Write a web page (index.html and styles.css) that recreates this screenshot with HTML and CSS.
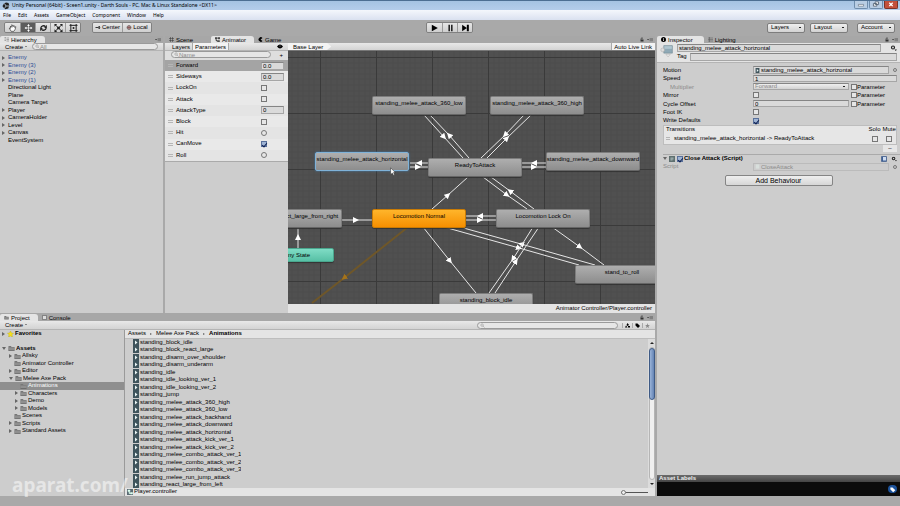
FILE: index.html
```
<!doctype html>
<html lang="en-us">
  <head>
    <meta charset="utf-8">
    <title>Unity Personal (64bit) - Sceen1.unity - Darth Souls</title>
    <link rel="stylesheet" href="styles.css">
  </head>
  <body>
	<svg class="defs" width="0" height="0" aria-hidden="true">
		<symbol id="i-folder" viewBox="0 0 14 12"><path d="M1 2h5l1 2h6v7H1z" fill="#777"/><path d="M1 5h12v6H1z" fill="#8f8f8f"/><path d="M1 11h12" stroke="#555"/></symbol>
		<symbol id="i-clip" viewBox="0 0 12 14"><path d="M0 0h12v14H0z" fill="#3f545c"/><path d="M4 3l5 4-5 4z" fill="#e8f4f4"/></symbol>
		<symbol id="i-lock" viewBox="0 0 10 10"><path d="M2 5h6v4H2z" fill="#333"/><path d="M3 5V3q2-3 4 0" fill="none" stroke="#333" stroke-width="1.4"/></symbol>
		<symbol id="i-menu" viewBox="0 0 14 10"><path d="M0 4h5L2.500 7z" fill="#333"/><path d="M6 3h8M6 5.500h8M6 8h8" stroke="#444"/></symbol>
		<symbol id="i-gear" viewBox="0 0 14 12"><circle cx="6" cy="5" r="3" fill="none" stroke="#222" stroke-width="2.400"/><path d="M9 9h5l-2.500 3z" fill="#222"/></symbol>
		<symbol id="i-search" viewBox="0 0 12 12"><circle cx="5" cy="5" r="3" fill="none" stroke="#777"/><path d="M7 7l4 4" stroke="#777"/></symbol>
	</svg>

	<header class="titlebar">
		<svg class="logo" viewBox="0 0 16 16"><path d="M8 1l5 1 1.500 5-2 6-6 1.500L2 10 1 8l3-5z" fill="#222"/><path d="M8 8h6M8 8L5 3M8 8l-3 5" stroke="#c8dcf0" stroke-width="1.500"/></svg>
		<h1>Unity Personal (64bit) - Sceen1.unity - Darth Souls - PC, Mac &amp; Linux Standalone &lt;DX11&gt;</h1>
		<div class="window-buttons">
			<button aria-label="Minimize"><svg viewBox="0 0 14 8"><path d="M4 4h6v2H4z" fill="#fff" stroke="#456" stroke-width=".6"/></svg></button>
			<button aria-label="Restore"><svg viewBox="0 0 14 8"><path d="M6 1h4v3H6zM4 3h4v3H4z" fill="#fff" stroke="#345" stroke-width=".8"/></svg></button>
			<button class="close" aria-label="Close"><svg viewBox="0 0 14 8"><path d="M5 2l4 4M9 2L5 6" stroke="#fff" stroke-width="1.500"/></svg></button>
		</div>
	</header>

	<nav class="menubar">
		<a href="#">File</a>
		<a href="#">Edit</a>
		<a href="#">Assets</a>
		<a href="#">GameObject</a>
		<a href="#">Component</a>
		<a href="#">Window</a>
		<a href="#">Help</a>
	</nav>

	<div class="toolbar">
		<div class="tools">
			<div class="group">
				<button aria-label="Hand"><svg viewBox="0 0 16 12"><path d="M6 11L3 6l2 .5V3l2 2V1l2 3 1-2 1 3 2-1-1 4-2 3z" fill="#fff" stroke="#333"/></svg></button>
				<button class="on" aria-label="Move"><svg viewBox="0 0 16 12"><path d="M8 1v10M3 6h10" stroke="#fff"/><path d="M8 0l2 3H6zM8 12l2-3H6zM2 6l3-2v4zM14 6l-3-2v4z" fill="#fff"/></svg></button>
				<button aria-label="Rotate"><svg viewBox="0 0 16 12"><path d="M4 6a4 4 0 0 1 7-2M12 6a4 4 0 0 1-7 2" fill="none" stroke="#222" stroke-width="2"/><path d="M13 1v5H9zM3 11V6h4z" fill="#222"/></svg></button>
				<button aria-label="Scale"><svg viewBox="0 0 16 12"><path d="M3 1l10 10M13 1L3 11" stroke="#222" stroke-width="1.500"/><path d="M6 4h4v4H6zM2 0h4L2 4zM14 0v4l-4-4zM2 12V8l4 4zM14 12h-4l4-4z" fill="#222"/></svg></button>
				<button aria-label="Rect"><svg viewBox="0 0 16 12"><path d="M4 0v12M12 0v12M2 2h12M2 10h12" stroke="#222" stroke-width="1.500"/><circle cx="8" cy="6" r="1.500" fill="#222"/></svg></button>
			</div>
			<div class="group wide">
				<button><svg viewBox="0 0 12 10"><path d="M1 5h6M9 2v6" stroke="#333" stroke-width="2"/><circle cx="8" cy="5" r="2.500" fill="#555"/></svg>Center</button>
				<button><svg viewBox="0 0 12 10"><circle cx="6" cy="5" r="4" fill="#b9a0a0" stroke="#444"/><path d="M2 5h8M6 1v8" stroke="#733"/></svg>Local</button>
			</div>
		</div>
		<div class="group play">
			<button aria-label="Play"><svg viewBox="0 0 14 12"><path d="M3 1l9 5-9 5z"/></svg></button>
			<button aria-label="Pause"><svg viewBox="0 0 14 12"><path d="M4 1h2v10H4zM8 1h2v10H8z"/></svg></button>
			<button aria-label="Step"><svg viewBox="0 0 14 12"><path d="M2 1l7 5-7 5zM9 1h3v10H9z"/></svg></button>
		</div>
		<div class="dropdowns">
			<select aria-label="Layers"><option>Layers</option></select>
			<select aria-label="Layout"><option>Layout</option></select>
			<select class="account" aria-label="Account"><option>Account</option></select>
		</div>
	</div>

	<main class="workspace">
		<section class="hierarchy panel">
			<div class="tabs">
				<button class="tab on"><svg viewBox="0 0 10 10"><path d="M1 1h3M1 4h3M1 7h3M5 2h5M5 5h5M5 8h5" stroke="#666"/></svg>Hierarchy</button>
				<span class="corner"><svg viewBox="0 0 14 10"><use href="#i-menu"/></svg></span>
			</div>
			<div class="bar">
				<button class="create">Create <i></i></button>
				<label class="search"><svg viewBox="0 0 12 12"><use href="#i-search"/></svg><input type="text" placeholder="All" aria-label="Search hierarchy"></label>
			</div>
			<ul class="tree">
				<li class="prefab"><i class="arrow"></i>Enemy</li>
				<li class="prefab"><i class="arrow"></i>Enemy (3)</li>
				<li class="prefab"><i class="arrow"></i>Enemy (2)</li>
				<li class="prefab"><i class="arrow"></i>Enemy (1)</li>
				<li><i></i>Directional Light</li>
				<li><i></i>Plane</li>
				<li><i></i>Camera Target</li>
				<li><i class="arrow"></i>Player</li>
				<li><i class="arrow"></i>CameraHolder</li>
				<li><i class="arrow"></i>Level</li>
				<li><i class="arrow"></i>Canvas</li>
				<li><i></i>EventSystem</li>
			</ul>
		</section>

		<section class="animator panel">
			<div class="tabs">
				<button class="tab scene"><svg viewBox="0 0 10 10"><path d="M3 0v10M7 0v10M0 3h10M0 7h10" stroke="#333"/></svg>Scene</button>
				<button class="tab on"><svg viewBox="0 0 10 10"><path d="M0 1h4v3H0zM6 1h4v3H6zM5 7h4v3H5zM2 4v4h3M4 2h2" fill="#555" stroke="#333" stroke-width=".8"/></svg>Animator</button>
				<button class="tab"><svg viewBox="0 0 10 10"><path d="M9 2A4.500 4.500 0 1 0 9 8L5 5z"/></svg>Game</button>
				<span class="corner"><svg viewBox="0 0 10 10"><use href="#i-lock"/></svg><svg viewBox="0 0 14 10"><use href="#i-menu"/></svg></span>
			</div>
			<div class="split">
				<div class="params">
					<div class="bar">
						<button class="seg">Layers</button>
						<button class="seg on">Parameters</button>
						<svg class="eye" viewBox="0 0 12 10"><path d="M0 5q6-8 12 0-6 8-12 0z"/><circle cx="6" cy="4" r="1" fill="#aaa"/></svg>
					</div>
					<div class="find">
						<label class="search"><svg viewBox="0 0 12 12"><use href="#i-search"/></svg><input type="text" placeholder="Name" aria-label="Search parameters"></label>
						<button class="plus" aria-label="Add parameter">+</button>
					</div>
					<ul class="param-list">
						<li class="on"><b></b><label for="p1">Forward</label><input id="p1" type="text" value="0.0"></li>
						<li><b></b><label for="p2">Sideways</label><input id="p2" type="text" value="0.0"></li>
						<li><b></b><label for="p3">LockOn</label><input id="p3" type="checkbox"></li>
						<li><b></b><label for="p4">Attack</label><input id="p4" type="checkbox"></li>
						<li><b></b><label for="p5">AttackType</label><input id="p5" type="text" value="0"></li>
						<li><b></b><label for="p6">Block</label><input id="p6" type="checkbox"></li>
						<li><b></b><label for="p7">Hit</label><input id="p7" type="radio" name="hit"></li>
						<li><b></b><label for="p8">CanMove</label><input id="p8" type="checkbox" checked></li>
						<li><b></b><label for="p9">Roll</label><input id="p9" type="radio" name="roll"></li>
					</ul>
				</div>
				<div class="graph">
					<div class="bar">
						<span class="crumb">Base Layer</span>
						<button class="live">Auto Live Link</button>
					</div>
					<div class="canvas">
						<svg class="wires" aria-hidden="true">
							<defs>
								<pattern id="grid" x="32" y="6" width="56" height="56" patternUnits="userSpaceOnUse">
									<path d="M6 0v56M11 0v56M17 0v56M22 0v56M28 0v56M34 0v56M39 0v56M45 0v56M50 0v56M0 6h56M0 11h56M0 17h56M0 22h56M0 28h56M0 34h56M0 39h56M0 45h56M0 50h56" stroke="#494949" stroke-width=".7"/>
									<path d="M.5 0v56M0 .5h56" stroke="#3a3a3a"/>
								</pattern>
								<marker id="head" viewBox="0 0 6 6" refX="3" refY="3" markerWidth="6" markerHeight="6" markerUnits="userSpaceOnUse" orient="auto"><path d="M0 0l6 3-6 3z" fill="#fff"/></marker>
								<marker id="head-default" viewBox="0 0 6 6" refX="3" refY="3" markerWidth="6" markerHeight="6" markerUnits="userSpaceOnUse" orient="auto"><path d="M0 0l6 3-6 3z" fill="#a5731a"/></marker>
							</defs>
							<rect width="100%" height="100%" fill="url(#grid)"/>
							<path class="default" d="M120 176L56 227 24 252"/>
							<g class="wire">
								<path d="M136 64L156 86 175 107"/>
								<path d="M181 107L161 84 142 64"/>
								<path d="M236 64L217 84 193 107"/>
								<path d="M199 107L219 87 243 64"/>
								<path d="M140 112H131 122"/>
								<path d="M122 116H130 140"/>
								<path d="M258 112H246 234"/>
								<path d="M234 116H246 258"/>
								<path d="M144 158L160 144 180 126"/>
								<path d="M195 126L219 144 239 158"/>
								<path d="M246 158L222 140 203 126"/>
								<path d="M54 169H68 84"/>
								<path d="M10 197V186 176"/>
								<path d="M208 165H192 178"/>
								<path d="M178 169H192 208"/>
								<path d="M135 176L162 210 188 242"/>
								<path d="M156 176L231 197 291 214"/>
								<path d="M307 214L233 193 172 176"/>
								<path d="M245 176L225 208 201 242"/>
								<path d="M207 242L228 210 251 176"/>
								<path d="M264 176L292 196 316 214"/>
							</g>
						</svg>
						<div class="node low">standing_melee_attack_360_low</div>
						<div class="node high">standing_melee_attack_360_high</div>
						<div class="node horizontal selected">standing_melee_attack_horizontal</div>
						<div class="node ready">ReadyToAttack</div>
						<div class="node downward">standing_melee_attack_downward</div>
						<div class="node react">standing_react_large_from_right</div>
						<div class="node normal">Locomotion Normal</div>
						<div class="node lockon">Locomotion Lock On</div>
						<div class="node any">Any State</div>
						<div class="node roll">stand_to_roll</div>
						<div class="node block">standing_block_idle</div>
						<svg class="cursor" viewBox="0 0 10 16"><path d="M1 1v11l3-2 2 4 2-1-2-4h3z" fill="#fff" stroke="#333"/></svg>
					</div>
					<div class="path">Animator Controller/Player.controller</div>
				</div>
			</div>
		</section>

		<section class="project panel">
			<div class="tabs">
				<button class="tab on"><svg viewBox="0 0 14 12"><use href="#i-folder"/></svg>Project</button>
				<button class="tab"><svg viewBox="0 0 10 10"><path d="M1 1h8v8H1z" fill="#ddd" stroke="#444"/></svg>Console</button>
				<span class="corner"><svg viewBox="0 0 10 10"><use href="#i-lock"/></svg><svg viewBox="0 0 14 10"><use href="#i-menu"/></svg></span>
			</div>
			<div class="bar">
				<button class="create">Create <i></i></button>
				<label class="search"><svg viewBox="0 0 12 12"><use href="#i-search"/></svg><input type="text" aria-label="Search project"></label>
				<button class="filter" aria-label="Search by type"><svg viewBox="0 0 10 10"><path d="M5 0l3 4-3 2-2-2zM0 9l2-4 3 4zM6 6h4v3H6z"/></svg></button>
				<button class="filter" aria-label="Search by label"><svg viewBox="0 0 10 10"><path d="M1 1h4l5 5-4 4-5-5z"/></svg></button>
				<button class="filter" aria-label="Save search"><svg viewBox="0 0 10 10"><path d="M5 0l1 4h4L7 6l1 4-3-2-3 2 1-4-3-2h4z" fill="#888"/></svg></button>
			</div>
			<div class="browser">
				<ul class="tree folders">
					<li class="root fav"><i class="arrow"></i><svg viewBox="0 0 12 12"><path d="M6 0l2 4 4 .5-3 3 1 4.500-4-2-4 2 1-4.500-3-3L4 4z" fill="#f5e020" stroke="#a90" stroke-width=".6"/></svg>Favorites</li>
					<li class="root"><i class="arrow open"></i><svg viewBox="0 0 14 12"><use href="#i-folder"/></svg>Assets</li>
					<li class="l1"><i class="arrow"></i><svg viewBox="0 0 14 12"><use href="#i-folder"/></svg>Allsky</li>
					<li class="l1"><i></i><svg viewBox="0 0 14 12"><use href="#i-folder"/></svg>Animator Controller</li>
					<li class="l1"><i class="arrow"></i><svg viewBox="0 0 14 12"><use href="#i-folder"/></svg>Editor</li>
					<li class="l1"><i class="arrow open"></i><svg viewBox="0 0 14 12"><use href="#i-folder"/></svg>Melee Axe Pack</li>
					<li class="l2 on"><i></i><svg viewBox="0 0 14 12"><use href="#i-folder"/></svg>Animations</li>
					<li class="l2"><i class="arrow"></i><svg viewBox="0 0 14 12"><use href="#i-folder"/></svg>Characters</li>
					<li class="l2"><i class="arrow"></i><svg viewBox="0 0 14 12"><use href="#i-folder"/></svg>Demo</li>
					<li class="l2"><i class="arrow"></i><svg viewBox="0 0 14 12"><use href="#i-folder"/></svg>Models</li>
					<li class="l1"><i></i><svg viewBox="0 0 14 12"><use href="#i-folder"/></svg>Scenes</li>
					<li class="l1"><i class="arrow"></i><svg viewBox="0 0 14 12"><use href="#i-folder"/></svg>Scripts</li>
					<li class="l1"><i class="arrow"></i><svg viewBox="0 0 14 12"><use href="#i-folder"/></svg>Standard Assets</li>
				</ul>
				<div class="files">
					<div class="crumbs"><a href="#">Assets</a><i class="arrow"></i><a href="#">Melee Axe Pack</a><i class="arrow"></i><strong>Animations</strong></div>
					<div class="scroll">
						<ul class="tree clips">
							<li><svg viewBox="0 0 12 14"><use href="#i-clip"/></svg>standing_block_idle</li>
							<li><svg viewBox="0 0 12 14"><use href="#i-clip"/></svg>standing_block_react_large</li>
							<li><svg viewBox="0 0 12 14"><use href="#i-clip"/></svg>standing_disarm_over_shoulder</li>
							<li><svg viewBox="0 0 12 14"><use href="#i-clip"/></svg>standing_disarm_underarm</li>
							<li><svg viewBox="0 0 12 14"><use href="#i-clip"/></svg>standing_idle</li>
							<li><svg viewBox="0 0 12 14"><use href="#i-clip"/></svg>standing_idle_looking_ver_1</li>
							<li><svg viewBox="0 0 12 14"><use href="#i-clip"/></svg>standing_idle_looking_ver_2</li>
							<li><svg viewBox="0 0 12 14"><use href="#i-clip"/></svg>standing_jump</li>
							<li><svg viewBox="0 0 12 14"><use href="#i-clip"/></svg>standing_melee_attack_360_high</li>
							<li><svg viewBox="0 0 12 14"><use href="#i-clip"/></svg>standing_melee_attack_360_low</li>
							<li><svg viewBox="0 0 12 14"><use href="#i-clip"/></svg>standing_melee_attack_backhand</li>
							<li><svg viewBox="0 0 12 14"><use href="#i-clip"/></svg>standing_melee_attack_downward</li>
							<li><svg viewBox="0 0 12 14"><use href="#i-clip"/></svg>standing_melee_attack_horizontal</li>
							<li><svg viewBox="0 0 12 14"><use href="#i-clip"/></svg>standing_melee_attack_kick_ver_1</li>
							<li><svg viewBox="0 0 12 14"><use href="#i-clip"/></svg>standing_melee_attack_kick_ver_2</li>
							<li><svg viewBox="0 0 12 14"><use href="#i-clip"/></svg>standing_melee_combo_attack_ver_1</li>
							<li><svg viewBox="0 0 12 14"><use href="#i-clip"/></svg>standing_melee_combo_attack_ver_2</li>
							<li><svg viewBox="0 0 12 14"><use href="#i-clip"/></svg>standing_melee_combo_attack_ver_3</li>
							<li><svg viewBox="0 0 12 14"><use href="#i-clip"/></svg>standing_melee_run_jump_attack</li>
							<li><svg viewBox="0 0 12 14"><use href="#i-clip"/></svg>standing_react_large_from_left</li>
						</ul>
						<div class="scrollbar"><i class="up"></i><div class="track"><div class="thumb"></div></div><i class="down"></i></div>
					</div>
					<div class="selection"><svg viewBox="0 0 12 12"><path d="M0 0h12v12H0z" fill="#5a6b74"/><path d="M2 2h4v3H2zM7 7h4v3H7zM4 5v4h3" fill="#dfe" stroke="#dfe"/></svg>Player.controller<input type="range" min="0" max="100" value="0" aria-label="Icon size"></div>
				</div>
			</div>
		</section>

		<section class="inspector panel">
			<div class="tabs">
				<button class="tab on"><svg viewBox="0 0 10 10"><circle cx="5" cy="5" r="5"/><path d="M5 2v1.500M5 4.500V8" stroke="#fff" stroke-width="1.500"/></svg>Inspector</button>
				<button class="tab"><svg viewBox="0 0 10 10"><path d="M0 2h10M0 5h10M0 8h10M3 0v10" stroke="#555"/></svg>Lighting</button>
				<span class="corner"><svg viewBox="0 0 10 10"><use href="#i-lock"/></svg><svg viewBox="0 0 14 10"><use href="#i-menu"/></svg></span>
			</div>
			<div class="head">
				<svg class="state" viewBox="0 0 26 26"><path d="M7 3h16v14H7z" fill="#8fa9b6" stroke="#6d838e"/><path d="M8 4h14v5H8z" fill="#b0c6d0"/><circle cx="5" cy="11" r="3.500" fill="#ddd" stroke="#aaa"/><path d="M11 19h8l-4 5z" fill="#eee" stroke="#aaa"/></svg>
				<div class="fields">
					<div><input type="text" aria-label="Name" value="standing_melee_attack_horizontal"><svg class="gear" viewBox="0 0 14 12"><use href="#i-gear"/></svg></div>
					<div><label for="tag">Tag</label><input id="tag" type="text"></div>
				</div>
			</div>
			<div class="props">
				<div class="row"><label for="motion">Motion</label><span class="object"><svg viewBox="0 0 12 14"><use href="#i-clip"/></svg><input id="motion" type="text" value="standing_melee_attack_horizontal"></span><i class="pick"></i></div>
				<div class="row"><label for="speed">Speed</label><input id="speed" type="text" value="1"></div>
				<div class="row"><label class="sub" for="mult">Multiplier</label><select id="mult" disabled><option>Forward</option></select><label class="param"><input type="checkbox">Parameter</label></div>
				<div class="row"><label for="mirror">Mirror</label><span class="value"><input id="mirror" type="checkbox"></span><label class="param"><input type="checkbox">Parameter</label></div>
				<div class="row"><label for="cycle">Cycle Offset</label><input id="cycle" type="text" value="0"><label class="param"><input type="checkbox">Parameter</label></div>
				<div class="row"><label for="foot">Foot IK</label><span class="value"><input id="foot" type="checkbox"></span></div>
				<div class="row"><label for="defaults">Write Defaults</label><span class="value"><input id="defaults" type="checkbox" checked></span></div>
			</div>
			<table class="transitions">
				<thead><tr><th>Transitions</th><th class="check">Solo</th><th class="check">Mute</th></tr></thead>
				<tbody><tr><td><b></b>standing_melee_attack_horizontal -&gt; ReadyToAttack</td><td class="check"><input type="checkbox" aria-label="Solo"></td><td class="check"><input type="checkbox" aria-label="Mute"></td></tr></tbody>
			</table>
			<button class="remove" aria-label="Remove transition">–</button>
			<div class="component">
				<h2><i class="arrow open"></i><svg viewBox="0 0 12 12"><path d="M0 0h12v12H0z" fill="#5f7070"/><path d="M3 4h6M3 6h6M3 8h4" stroke="#dee"/></svg><label><input type="checkbox" checked>Close Attack (Script)</label><svg class="help" viewBox="0 0 12 12"><path d="M1 1h10v10H1z" fill="#3d6096" stroke="#26477c"/><path d="M4 2h6v7H4z" fill="#cfdcf0"/></svg><svg class="gear" viewBox="0 0 14 12"><use href="#i-gear"/></svg></h2>
				<div class="row disabled"><label for="script">Script</label><span class="object"><svg viewBox="0 0 12 14"><path d="M1 1h10v12H1z" fill="#d8dfdc"/></svg><input id="script" type="text" value="CloseAttack" disabled></span><i class="pick"></i></div>
			</div>
			<button class="add">Add Behaviour</button>
			<footer class="labels">
				<h2>Asset Labels</h2>
				<div><button aria-label="Edit labels"><svg viewBox="0 0 10 10"><path d="M2 2h3l4 4-3 3-4-4z" fill="#fff"/></svg></button></div>
			</footer>
		</section>
	</main>
	<div class="watermark">aparat.com/</div>
  </body>
</html>
```
FILE: styles.css
```
*
{
	box-sizing: border-box;
}

body
{
	display: flex;
	flex-direction: column;
	height: 100vh;
	margin: 0;
	overflow: hidden;
	background: #a9a9a9;
	color: #000;
	font-family: "Liberation Sans", Arial, sans-serif;
	font-size: 6px;
	line-height: 1.25;
}

ul, h1, h2
{
	margin: 0;
	padding: 0;
	list-style: none;
	font-size: 6px;
}

button, input, select
{
	margin: 0;
	padding: 0;
	border: 0;
	background: none;
	color: inherit;
	font: inherit;
	min-width: 0;
}

a
{
	color: inherit;
	text-decoration: none;
}

svg
{
	flex: none;
	display: block;
}

.defs
{
	position: absolute;
}

/* window chrome */
.titlebar
{
	display: flex;
	align-items: center;
	gap: 2px;
	height: 10px;
	padding-left: 2px;
	border-top: 1px solid #4d6f92;
	background: linear-gradient(#a5c3e2, #b4cdea);
}

.titlebar h1
{
	flex: 1;
	font-family: "Noto Sans", sans-serif;
	font-size: 5px;
	font-weight: normal;
}

.logo
{
	width: 8px;
	height: 8px;
}

.window-buttons
{
	display: flex;
	align-self: flex-start;
	gap: 1px;
	padding-right: 2px;
}

.window-buttons button
{
	width: 14px;
	height: 8px;
	border: 1px solid #6f8dac;
	border-top: 0;
	border-radius: 0 0 2px 2px;
	background: #b9cde3;
}

.window-buttons .close
{
	background: #c4513c;
	border-color: #7d3327;
}

.menubar
{
	display: flex;
	align-items: center;
	gap: 7px;
	height: 10px;
	padding: 0 3px;
	background: linear-gradient(#f4f7fc, #dae1f0);
	font-family: "Noto Sans", sans-serif;
	font-size: 5px;
}

.toolbar
{
	display: grid;
	grid-template-columns: 1fr auto 1fr;
	align-items: center;
	height: 16px;
	padding: 0 5px 0 4px;
}

.play
{
	margin-bottom: 1px;
}

.tools, .group, .dropdowns
{
	display: flex;
}

.tools
{
	gap: 11px;
}

.tools, .dropdowns
{
	margin-bottom: 1px;
}

.group
{
	border: 1px solid #808080;
	border-radius: 2px;
	overflow: hidden;
}

.group button
{
	display: flex;
	align-items: center;
	justify-content: center;
	gap: 1px;
	width: 15px;
	height: 9px;
	background: linear-gradient(#e6e6e6, #cfcfcf);
}

.group button + button
{
	border-left: 1px solid #9a9a9a;
}

.group .on
{
	background: #5c5c5c;
}

.group svg
{
	width: 11px;
	height: 8px;
}

.group.wide button
{
	width: 29px;
}

.wide svg
{
	width: 6px;
	height: 5px;
}

.dropdowns
{
	justify-content: flex-end;
	gap: 5px;
}

.dropdowns select
{
	appearance: none;
	width: 38px;
	height: 10px;
	padding: 0 3px;
	border: 1px solid #7d7d7d;
	border-radius: 2px;
}

.dropdowns select, .row select
{
	background-image: conic-gradient(from -45deg at 50% 100%, #222 0 0), linear-gradient(#efefef, #d2d2d2);
	background-size: 2px 1px, auto;
	background-position: right 3px center, 0 0;
	background-repeat: no-repeat;
}

.dropdowns .account
{
	margin-left: 4px;
}

/* docking layout */
.workspace
{
	flex: 1;
	min-height: 0;
	display: grid;
	grid-template-columns: 163fr 490fr 243fr;
	grid-template-rows: 277fr 183fr;
	column-gap: 2px;
	margin-bottom: 10px;
}

.panel
{
	display: flex;
	flex-direction: column;
	min-width: 0;
	min-height: 0;
	background: #cdcdcd;
}

.project
{
	grid-column: 1 / 3;
}

.inspector
{
	grid-column: 3;
	grid-row: 1 / 3;
}

.tabs
{
	display: flex;
	height: 7px;
	background: #a7a7a7;
}

.tab
{
	display: flex;
	align-items: center;
	gap: 2px;
	padding: 0 8px 0 4px;
	border-radius: 2px 3px 0 0;
	line-height: 1;
}

.tab.on
{
	background: #e4e4e4;
}

.tab svg
{
	width: 5px;
	height: 5px;
}

.tab.scene
{
	padding-right: 18px;
}

.inspector .tab.on
{
	padding-right: 11px;
}

.corner
{
	display: flex;
	align-items: center;
	gap: 2px;
	margin-left: auto;
	padding-right: 2px;
}

.corner svg
{
	width: 6px;
	height: 5px;
}

.bar
{
	display: flex;
	flex: none;
	height: 8px;
	background: linear-gradient(#e8e8e8, #d3d3d3);
	border-bottom: 1px solid #b4b4b4;
	line-height: 1;
}

.create
{
	display: flex;
	align-items: center;
	gap: 2px;
	padding: 0 2px 0 5px;
}

.create i
{
	border: 1px solid transparent;
	border-top-color: #333;
}

.search
{
	display: flex;
	align-items: center;
	height: 7px;
	padding: 0 2px;
	border: 1px solid #9a9a9a;
	border-radius: 4px;
	background: #e6e6e6;
}

.search svg
{
	width: 5px;
	height: 5px;
}

.search input
{
	flex: 1;
	height: 5px;
	line-height: 5px;
}

.search input::placeholder
{
	color: #8a8a8a;
}

.hierarchy .search
{
	flex: 1;
	margin: 0 5px 0 3px;
}

.arrow
{
	border: 2px solid transparent;
	border-left: 3px solid #666;
	border-right: 0;
}

.arrow.open
{
	border: 2px solid transparent;
	border-top: 3px solid #666;
	border-bottom: 0;
}

.tree li
{
	display: flex;
	align-items: center;
	white-space: nowrap;
}

.tree i
{
	flex: none;
	width: 3px;
	margin-right: 3px;
}

.hierarchy .tree
{
	padding: 3px 2px;
}

.prefab
{
	color: #2b4a94;
}

/* animator window */
.split
{
	flex: 1;
	min-height: 0;
	display: grid;
	grid-template-columns: 123fr 367fr;
}

.params, .graph
{
	display: flex;
	flex-direction: column;
	min-width: 0;
	min-height: 0;
}

.params .bar
{
	align-items: center;
	padding: 0 5px;
}

.seg
{
	height: 7px;
	padding: 0 2px;
	border-right: 1px solid #aaa;
}

.seg.on
{
	background: #f3f3f3;
}

.eye
{
	width: 6px;
	height: 5px;
	margin-left: auto;
}

.find
{
	display: flex;
	align-items: center;
	padding: 0 5px 2px 6px;
	background: #dedede;
	line-height: 1;
}

.find .search
{
	flex: 1;
	margin-right: 8px;
}

.param-list
{
	display: grid;
	grid-auto-rows: 1fr;
	min-height: 102px;
	background: #e4e4e4;
	border-bottom: 1px solid #aaa;
}

.param-list li
{
	display: grid;
	grid-template-columns: 5px 1fr 23px;
	align-items: center;
	column-gap: 3px;
	padding: 0 4px 0 3px;
}

.param-list li:nth-child(even)
{
	background: #e9e9e9;
}

.param-list .on
{
	background: #a4a4a4;
}

.param-list b, .transitions b
{
	height: 3px;
	border: solid #b5b5b5;
	border-width: 1px 0;
}

input[type=text]
{
	height: 8px;
	line-height: 6px;
}

.param-list input[type=text], .fields input, .row > input[type=text], .row select, .object
{
	padding: 0 1px;
	border: 1px solid #a6a6a6;
	border-top-color: #858585;
	background-color: #dadada;
}

input[type=checkbox], input[type=radio]
{
	appearance: none;
	display: block;
	flex: none;
	width: 6px;
	height: 6px;
	border: 1px solid #777;
	background: #e6e6e6;
}

input[type=radio]
{
	border-radius: 50%;
}

input[type=checkbox]:checked
{
	background: #9fb4d4;
	border-color: #59709a;
}

input[type=checkbox]:checked::before
{
	content: "";
	display: block;
	width: 2px;
	height: 4px;
	margin-left: 1px;
	border: solid #0c1f52;
	border-width: 0 1px 1px 0;
	transform: rotate(40deg);
}

.graph .bar
{
	justify-content: space-between;
	border-bottom-color: #777;
}

.crumb
{
	padding: 1px 8px 0 5px;
	background: #f3f3f3;
	clip-path: polygon(0 0, 90% 0, 100% 50%, 90% 100%, 0 100%);
}

.live
{
	padding: 0 3px 0 2px;
	border-left: 1px solid #aaa;
	background: #f3f3f3;
}

.canvas
{
	position: relative;
	flex: 1;
	overflow: hidden;
	background: #505050;
}

.wires
{
	width: 100%;
	height: 100%;
}

.wire path
{
	fill: none;
	stroke: #e6e6e6;
	marker-mid: url(#head);
}

.default
{
	fill: none;
	stroke: #6f5729;
	stroke-width: 2;
	marker-mid: url(#head-default);
}

.node
{
	position: absolute;
	display: flex;
	justify-content: center;
	width: 94px;
	height: 19px;
	padding-top: 3px;
	border: 1px solid #7d7d7d;
	border-bottom-color: #666;
	border-radius: 2px;
	background: linear-gradient(#aeaeae, #8d8d8d);
	box-shadow: 0 1px 1px #333;
	white-space: nowrap;
}

.node.selected
{
	border-color: #7fb2d8;
	box-shadow: 0 0 2px #3f86c0;
}

.low { left: 84px; top: 45px; }
.high { left: 202px; top: 45px; }
.horizontal { left: 27px; top: 101px; }
.ready { left: 140px; top: 107px; }
.downward { left: 258px; top: 101px; }
.react { left: -40px; top: 158px; }
.lockon { left: 208px; top: 158px; }
.roll { left: 287px; top: 214px; }
.block { left: 151px; top: 242px; }

.normal
{
	left: 84px;
	top: 158px;
	border-color: #c97b05;
	background: linear-gradient(#ffb52b, #f68f00);
}

.any
{
	left: -28px;
	top: 197px;
	width: 74px;
	height: 14px;
	border-color: #4aa78e;
	background: linear-gradient(#7fdcc5, #57c0a5);
}

.cursor
{
	position: absolute;
	left: 102px;
	top: 116px;
	width: 6px;
	height: 10px;
}

.path
{
	height: 9px;
	padding: 1px 3px 0;
	background: #e4e4e4;
	text-align: right;
}

/* project window */
.project
{
	border-top: 1px solid #a7a7a7;
}

.project .bar
{
	height: 9px;
	align-items: center;
}

.project .bar .search
{
	width: 141px;
	margin-left: auto;
	margin-right: 4px;
}

.filter
{
	width: 10px;
	border-left: 1px solid #aaa;
}

.filter:last-child
{
	margin-right: 3px;
}

.filter svg
{
	width: 5px;
	height: 5px;
	margin: auto;
}

.browser
{
	flex: 1;
	min-height: 0;
	display: grid;
	grid-template-columns: 125fr 530fr;
}

.folders
{
	border-right: 1px solid #9a9a9a;
}

.folders li
{
	padding-left: 2px;
}

.folders i
{
	margin-right: 2px;
}

.folders svg
{
	width: 7px;
	height: 6px;
	margin-right: 1px;
}

.folders .root
{
	font-weight: bold;
}

.folders .fav
{
	margin-bottom: 7px;
}

.folders .l1
{
	padding-left: 9px;
}

.folders .l2
{
	padding-left: 15px;
}

.folders .on
{
	background: #8f8f8f;
	color: #fff;
}

.files
{
	display: flex;
	flex-direction: column;
	min-height: 0;
}

.crumbs
{
	display: flex;
	align-items: center;
	gap: 4px;
	padding-left: 3px;
	background: #e4e4e4;
	border-bottom: 1px solid #bdbdbd;
}

.crumbs .arrow
{
	border-width: 1px 0 1px 2px;
}

.scroll
{
	flex: 1;
	min-height: 0;
	display: flex;
	justify-content: space-between;
}

.clips
{
	overflow: hidden;
	padding-left: 8px;
}

.clips svg, .object svg
{
	width: 6px;
	height: 7px;
	margin-right: 1px;
}

.scrollbar
{
	display: flex;
	flex-direction: column;
	align-items: center;
	width: 7px;
	background: #dcdcdc;
}

.scrollbar i
{
	margin: 3px 0;
	border: 2px solid transparent;
}

.scrollbar .up
{
	border-top: 0;
	border-bottom-color: #222;
}

.scrollbar .down
{
	border-bottom: 0;
	border-top-color: #222;
}

.track
{
	flex: 1;
	width: 6px;
	border: 1px solid #b5b5b5;
	border-radius: 3px;
	background: #f0f0f0;
}

.thumb
{
	height: 40%;
	margin: 0 -1px;
	border: 1px solid #3e5a85;
	border-radius: 3px;
	background: linear-gradient(90deg, #9ab3d8, #6484b5);
}

.selection
{
	display: flex;
	align-items: center;
	gap: 1px;
	height: 8px;
	padding: 0 7px 0 2px;
	background: #e4e4e4;
}

.selection svg
{
	width: 6px;
	height: 6px;
}

input[type=range]
{
	appearance: none;
	width: 27px;
	height: 5px;
	margin-left: auto;
	background: linear-gradient(#555, #555) center / 100% 1px no-repeat;
}

input[type=range]::-webkit-slider-thumb
{
	appearance: none;
	width: 5px;
	height: 5px;
	border: 1px solid #777;
	border-radius: 50%;
	background: #eee;
}

/* inspector */
.head
{
	display: flex;
	gap: 3px;
	padding: 1px 3px 1px 3px;
	background: #e4e4e4;
	border-bottom: 1px solid #b4b4b4;
}

.state
{
	width: 14px;
	height: 14px;
}

.fields
{
	flex: 1;
	display: grid;
	gap: 1px;
}

.fields div
{
	display: flex;
	align-items: center;
	gap: 3px;
}

.fields input
{
	flex: 1;
}

.gear
{
	width: 7px;
	height: 6px;
	margin-left: 6px;
}

.props
{
	display: grid;
	padding: 3px 3px 0 6px;
	line-height: 1.4;
}

.row
{
	display: grid;
	grid-template-columns: 90fr 96fr 48fr;
	align-items: center;
}

.row input[type=text]
{
	height: 7px;
	line-height: 5px;
}

.row select
{
	appearance: none;
	height: 7px;
	line-height: 5px;
	color: #8b8b8b;
	opacity: 1;
}

.sub
{
	padding-left: 7px;
	color: #8b8b8b;
}

#speed
{
	grid-column: 2 / 4;
}

.object
{
	display: flex;
	align-items: center;
	height: 8px;
	padding: 0 1px;
}

.object svg
{
	width: 5px;
	height: 5px;
}

.object input
{
	flex: 1;
}

.row:has(.object)
{
	grid-template-columns: 90fr 136fr 8fr;
}

.pick
{
	justify-self: end;
	width: 4px;
	height: 4px;
	border: 1px solid #777;
	border-radius: 50%;
}

.param
{
	display: flex;
	align-items: center;
	padding-left: 2px;
}

.transitions
{
	margin: 0 3px 0 6px;
	border-collapse: collapse;
	background: #e6e6e6;
	border: 1px solid #bdbdbd;
}

.transitions th, .transitions td
{
	height: 9px;
	padding: 0 0 0 2px;
	font-weight: normal;
	text-align: left;
}

.transitions td
{
	height: 10px;
}

.transitions b
{
	display: inline-block;
	width: 4px;
	margin-right: 4px;
}

.transitions .check
{
	width: 14px;
	padding: 0;
}

.transitions td.check
{
	padding-left: 3px;
}

.remove
{
	align-self: flex-end;
	width: 14px;
	height: 7px;
	margin-right: 3px;
	background: #e6e6e6;
	line-height: 1;
}

.component
{
	margin: 2px 0 0 6px;
	padding-right: 3px;
	border-top: 1px solid #aaa;
}

.component h2
{
	display: flex;
	align-items: center;
	gap: 2px;
	height: 8px;
}

.component h2 svg, .component h2 label
{
	display: flex;
	align-items: center;
	gap: 1px;
	height: 6px;
}

.component h2 svg
{
	width: 6px;
}

.component .help
{
	margin-left: auto;
}

.component .gear
{
	margin-left: 2px;
}

.disabled
{
	color: #8b8b8b;
}

.disabled .object
{
	border-color: #bbb;
	background: none;
}

.add
{
	align-self: center;
	width: 108px;
	height: 11px;
	margin-top: 4px;
	border: 1px solid #858585;
	border-radius: 2px;
	background: linear-gradient(#efefef, #d6d6d6);
	font-size: 7px;
	line-height: 1;
}

.labels
{
	margin-top: auto;
	background: #0b0b0b;
}

.labels h2
{
	padding: 0 2px;
	background: linear-gradient(#6c6c6c, #444);
	color: #eee;
}

.labels div
{
	display: flex;
	align-items: center;
	justify-content: flex-end;
	height: 14px;
	padding-right: 3px;
}

.labels button
{
	width: 9px;
	height: 8px;
	border-radius: 4px;
	background: #1d539b;
}

.labels svg
{
	width: 7px;
	height: 7px;
	margin: auto;
}

.watermark
{
	position: absolute;
	left: 12px;
	bottom: 8px;
	color: rgba(255, 255, 255, .5);
	font: bold 19px "Noto Sans", sans-serif;
}
```
